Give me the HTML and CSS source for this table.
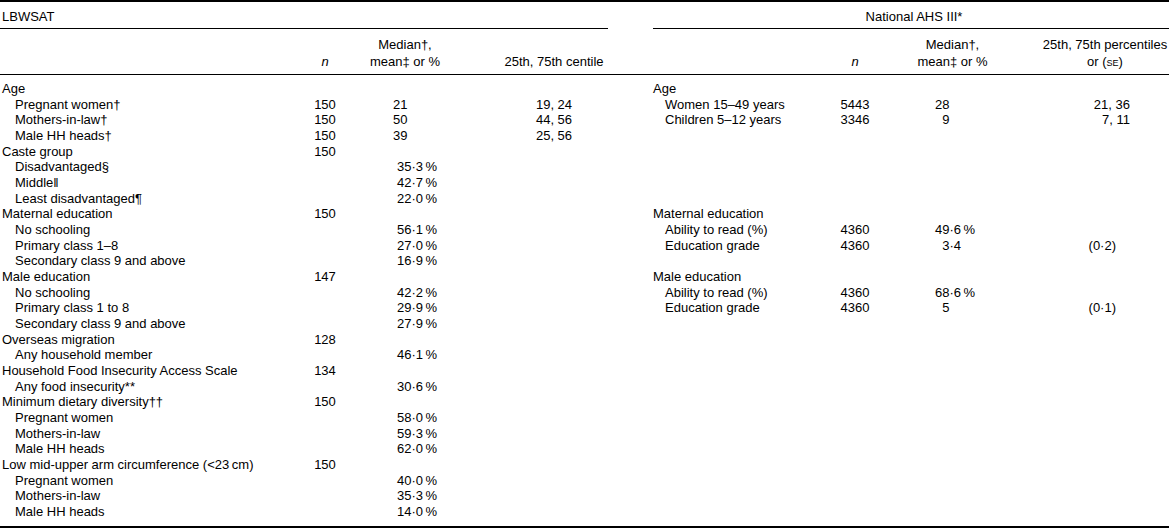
FILE: index.html
```html
<!DOCTYPE html>
<html lang="en">
<head>
<meta charset="utf-8">
<title>LBWSAT vs National AHS III</title>
<link rel="stylesheet" href="styles.css">
</head>
<body>
<table class="t">
  <colgroup>
    <col class="w-lab"><col class="w-n"><col class="w-med"><col class="w-cen">
    <col class="w-sp">
    <col class="w-rlab"><col class="w-rn"><col class="w-rmed"><col class="w-rcen">
  </colgroup>
  <thead>
    <tr class="grp">
      <th colspan="4" class="g-left">LBWSAT</th>
      <th class="sp"></th>
      <th colspan="4" class="g-right">National AHS III*</th>
    </tr>
    <tr class="colh">
      <th></th>
      <th class="hc"><i>n</i></th>
      <th class="hc">Median†,<br>mean‡ or %</th>
      <th class="hc cen">25th, 75th centile</th>
      <th></th>
      <th></th>
      <th class="hc"><i>n</i></th>
      <th class="hc">Median†,<br>mean‡ or %</th>
      <th class="hc rcen">25th, 75th percentiles<br>or (<span class="sc">se</span>)</th>
    </tr>
  </thead>
  <tbody>
    <tr class="first"><td class="lab">Age</td><td class="n"></td><td class="m"></td><td class="c"></td><td></td><td class="rlab">Age</td><td class="n"></td><td class="rm"></td><td class="rc"></td></tr>
    <tr><td class="sub">Pregnant women†</td><td class="n">150</td><td class="m">21</td><td class="c">19, 24</td><td></td><td class="rsub">Women 15–49 years</td><td class="n">5443</td><td class="rm">28</td><td class="rc">21, 36</td></tr>
    <tr><td class="sub">Mothers-in-law†</td><td class="n">150</td><td class="m">50</td><td class="c">44, 56</td><td></td><td class="rsub">Children 5–12 years</td><td class="n">3346</td><td class="rm">&#8199;9</td><td class="rc">7, 11</td></tr>
    <tr><td class="sub">Male HH heads†</td><td class="n">150</td><td class="m">39</td><td class="c">25, 56</td><td></td><td></td><td></td><td></td><td></td></tr>
    <tr><td class="lab">Caste group</td><td class="n">150</td><td class="m"></td><td class="c"></td><td></td><td></td><td></td><td></td><td></td></tr>
    <tr><td class="sub">Disadvantaged§</td><td class="n"></td><td class="m p">35·3&#8201;%</td><td class="c"></td><td></td><td></td><td></td><td></td><td></td></tr>
    <tr><td class="sub">Middle‖</td><td class="n"></td><td class="m p">42·7&#8201;%</td><td class="c"></td><td></td><td></td><td></td><td></td><td></td></tr>
    <tr><td class="sub">Least disadvantaged¶</td><td class="n"></td><td class="m p">22·0&#8201;%</td><td class="c"></td><td></td><td></td><td></td><td></td><td></td></tr>
    <tr><td class="lab">Maternal education</td><td class="n">150</td><td class="m"></td><td class="c"></td><td></td><td class="rlab">Maternal education</td><td class="n"></td><td class="rm"></td><td class="rc"></td></tr>
    <tr><td class="sub">No schooling</td><td class="n"></td><td class="m p">56·1&#8201;%</td><td class="c"></td><td></td><td class="rsub">Ability to read (%)</td><td class="n">4360</td><td class="rm">49·6&#8201;%</td><td class="rc"></td></tr>
    <tr><td class="sub">Primary class 1–8</td><td class="n"></td><td class="m p">27·0&#8201;%</td><td class="c"></td><td></td><td class="rsub">Education grade</td><td class="n">4360</td><td class="rm">&#8199;3·4</td><td class="rc se">(0·2)</td></tr>
    <tr><td class="sub">Secondary class 9 and above</td><td class="n"></td><td class="m p">16·9&#8201;%</td><td class="c"></td><td></td><td></td><td></td><td></td><td></td></tr>
    <tr><td class="lab">Male education</td><td class="n">147</td><td class="m"></td><td class="c"></td><td></td><td class="rlab">Male education</td><td class="n"></td><td class="rm"></td><td class="rc"></td></tr>
    <tr><td class="sub">No schooling</td><td class="n"></td><td class="m p">42·2&#8201;%</td><td class="c"></td><td></td><td class="rsub">Ability to read (%)</td><td class="n">4360</td><td class="rm">68·6&#8201;%</td><td class="rc"></td></tr>
    <tr><td class="sub">Primary class 1 to 8</td><td class="n"></td><td class="m p">29·9&#8201;%</td><td class="c"></td><td></td><td class="rsub">Education grade</td><td class="n">4360</td><td class="rm">&#8199;5</td><td class="rc se">(0·1)</td></tr>
    <tr><td class="sub">Secondary class 9 and above</td><td class="n"></td><td class="m p">27·9&#8201;%</td><td class="c"></td><td></td><td></td><td></td><td></td><td></td></tr>
    <tr><td class="lab">Overseas migration</td><td class="n">128</td><td class="m"></td><td class="c"></td><td></td><td></td><td></td><td></td><td></td></tr>
    <tr><td class="sub">Any household member</td><td class="n"></td><td class="m p">46·1&#8201;%</td><td class="c"></td><td></td><td></td><td></td><td></td><td></td></tr>
    <tr><td class="lab">Household Food Insecurity Access Scale</td><td class="n">134</td><td class="m"></td><td class="c"></td><td></td><td></td><td></td><td></td><td></td></tr>
    <tr><td class="sub">Any food insecurity**</td><td class="n"></td><td class="m p">30·6&#8201;%</td><td class="c"></td><td></td><td></td><td></td><td></td><td></td></tr>
    <tr><td class="lab">Minimum dietary diversity††</td><td class="n">150</td><td class="m"></td><td class="c"></td><td></td><td></td><td></td><td></td><td></td></tr>
    <tr><td class="sub">Pregnant women</td><td class="n"></td><td class="m p">58·0&#8201;%</td><td class="c"></td><td></td><td></td><td></td><td></td><td></td></tr>
    <tr><td class="sub">Mothers-in-law</td><td class="n"></td><td class="m p">59·3&#8201;%</td><td class="c"></td><td></td><td></td><td></td><td></td><td></td></tr>
    <tr><td class="sub">Male HH heads</td><td class="n"></td><td class="m p">62·0&#8201;%</td><td class="c"></td><td></td><td></td><td></td><td></td><td></td></tr>
    <tr><td class="lab">Low mid-upper arm circumference (&lt;23&#8201;cm)</td><td class="n">150</td><td class="m"></td><td class="c"></td><td></td><td></td><td></td><td></td><td></td></tr>
    <tr><td class="sub">Pregnant women</td><td class="n"></td><td class="m p">40·0&#8201;%</td><td class="c"></td><td></td><td></td><td></td><td></td><td></td></tr>
    <tr><td class="sub">Mothers-in-law</td><td class="n"></td><td class="m p">35·3&#8201;%</td><td class="c"></td><td></td><td></td><td></td><td></td><td></td></tr>
    <tr class="last"><td class="sub">Male HH heads</td><td class="n"></td><td class="m p">14·0&#8201;%</td><td class="c"></td><td></td><td></td><td></td><td></td><td></td></tr>
  </tbody>
</table>
</body>
</html>
```
FILE: styles.css
```css
html, body {
  margin: 0;
  padding: 0;
  background: #fff;
}
body {
  font-family: "Liberation Sans", Arial, sans-serif;
  font-size: 13px;
  color: #000;
}
.t {
  width: 1169px;
  table-layout: fixed;
  border-collapse: separate;
  border-spacing: 0;
  border-top: 2px solid #000;
  border-bottom: 2px solid #000;
}
.w-lab { width: 290px; }
.w-n { width: 70px; }
.w-med { width: 90px; }
.w-cen { width: 158px; }
.w-sp { width: 45px; }
.w-rlab { width: 167px; }
.w-rn { width: 70px; }
.w-rmed { width: 125px; }
.w-rcen { width: 154px; }

th {
  font-weight: normal;
  padding: 0;
}
td {
  padding: 0;
  line-height: 15.67px;
  white-space: nowrap;
  vertical-align: middle;
}
.grp th {
  padding: 7px 0 3px;
  line-height: 16px;
  border-bottom: 1px solid #000;
  text-align: left;
}
.grp .g-left { padding-left: 2px; }
.grp .g-right { text-align: center; padding-left: 6px; }
.grp .sp { border-bottom: none; }

.colh th {
  padding: 7px 0 4px;
  line-height: 17px;
  vertical-align: bottom;
  border-bottom: 1px solid #000;
  text-align: center;
}
.colh .cen { padding-left: 50px; }
.colh .rcen { padding-left: 26px; white-space: nowrap; }
.sc { font-variant: small-caps; }

td.lab { padding-left: 2px; }
td.sub { padding-left: 15px; }
td.rlab { padding-left: 0; }
td.rsub { padding-left: 12px; }
td.n { text-align: center; }
td.m { padding-left: 33px; }
td.m.p { padding-left: 37px; }
td.c { text-align: center; padding-left: 50px; }
td.rm { padding-left: 45px; }
td.rc { text-align: right; padding-right: 39px; }
td.rc.se { padding-right: 53px; }

tr.first td { padding-top: 6px; }
tr.last td { padding-bottom: 6px; }
```
